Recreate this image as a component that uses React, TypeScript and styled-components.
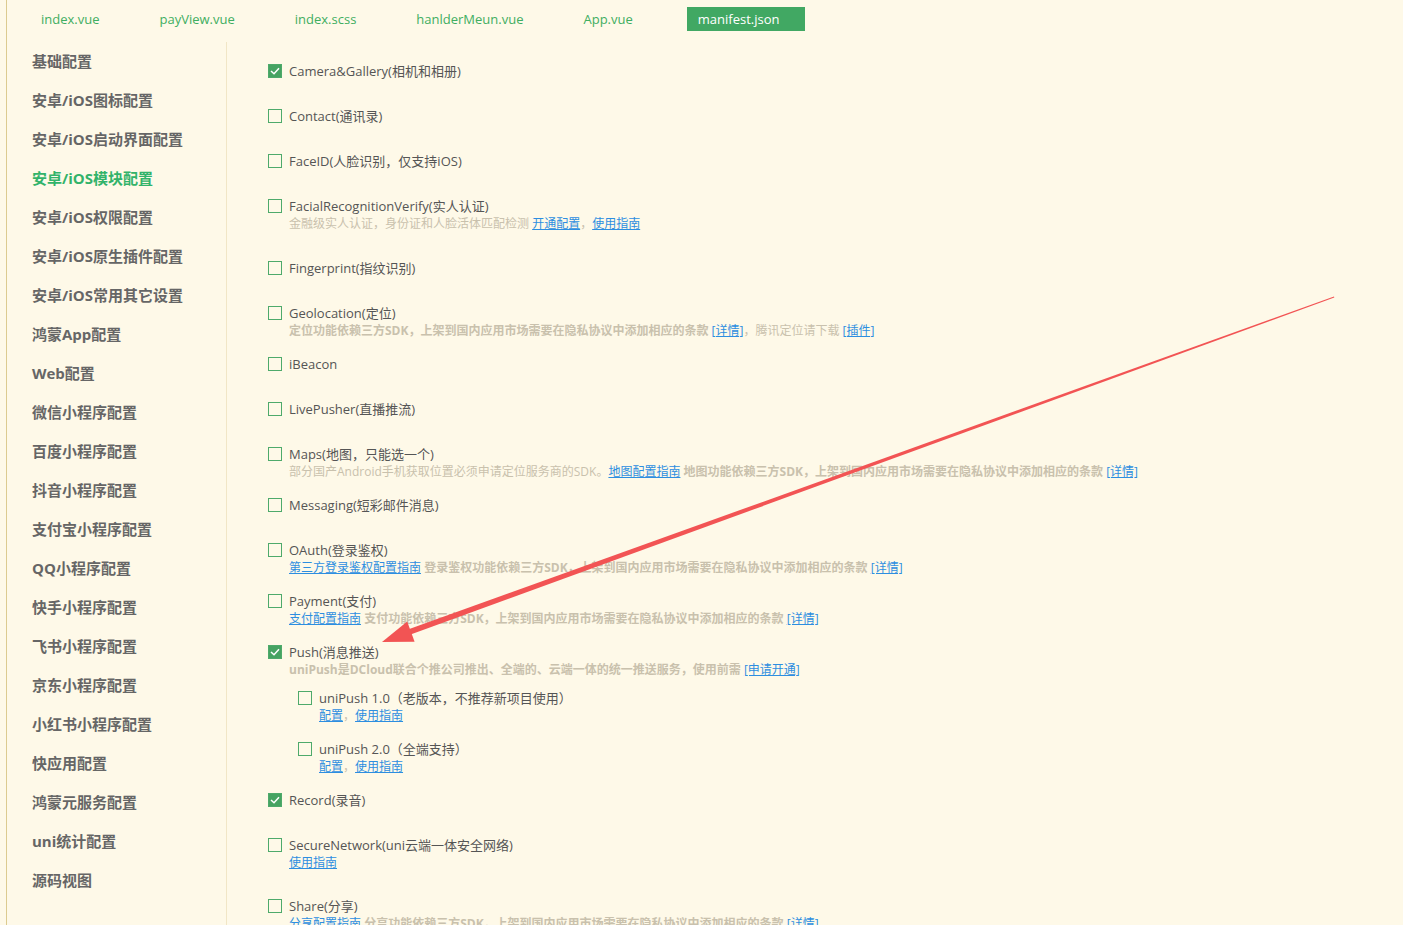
import React from 'react';
import styled, { createGlobalStyle } from 'styled-components';

const GlobalStyle = createGlobalStyle`
  html, body {
    margin: 0;
    padding: 0;
    background: #fef9e8;
    overflow: hidden;
  }
  body {
    font-family: "Open Sans", "Noto Sans CJK SC", sans-serif;
  }
`;

const Page = styled.div`
  position: relative;
  height: 925px;
  margin-left: 6px;
  border-left: 1px solid #dccb90;
  background: #fef9e8;
  overflow: hidden;
`;

const TabBar = styled.div`
  display: flex;
  align-items: flex-start;
  height: 42px;
  padding: 7px 0 0 4px;
  box-sizing: border-box;
`;

const Tab = styled.div<{ $active?: boolean }>`
  height: 24px;
  line-height: 24px;
  font-size: 13px;
  padding: ${(p) => (p.$active ? '0 26px 0 11px' : '0 30px')};
  margin-left: ${(p) => (p.$active ? '24px' : '0')};
  color: ${(p) => (p.$active ? '#ffffff' : '#3fae61')};
  background: ${(p) => (p.$active ? '#41a863' : 'transparent')};
  white-space: nowrap;
`;

const Body = styled.div`
  display: flex;
  height: 883px;
`;

const Sidebar = styled.div`
  width: 220px;
  flex-shrink: 0;
  box-sizing: border-box;
  padding-left: 25px;
  border-right: 1px solid #f1e6c6;
`;

const MenuItem = styled.div<{ $active?: boolean }>`
  height: 39px;
  line-height: 39px;
  font-size: 15px;
  font-weight: bold;
  color: ${(p) => (p.$active ? '#32b36a' : '#666666')};
  white-space: nowrap;
`;

const Content = styled.div`
  flex: 1;
  padding: 20px 0 0 41px;
`;

const Item = styled.div<{ $gap: number }>`
  margin-bottom: ${(p) => p.$gap}px;
`;

const TitleRow = styled.label`
  display: flex;
  align-items: center;
  height: 17px;
  font-size: 13px;
  color: #555555;
  white-space: nowrap;
`;

const Box = styled.span<{ $checked?: boolean }>`
  width: 14px;
  height: 14px;
  box-sizing: border-box;
  margin-right: 7px;
  border: 1px solid #4eaa6b;
  background: ${(p) => (p.$checked ? '#46a362' : 'transparent')};
  display: flex;
  align-items: center;
  justify-content: center;
  flex-shrink: 0;
`;

const Desc = styled.div<{ $bold?: boolean }>`
  height: 17px;
  line-height: 17px;
  margin-top: 1px;
  padding-left: 21px;
  font-size: 12px;
  color: #c9c1ad;
  font-weight: ${(p) => (p.$bold ? 'bold' : 'normal')};
  white-space: nowrap;
`;

const Strong = styled.span`
  font-weight: bold;
`;

const Link = styled.a`
  color: #2d8ee0;
  text-decoration: underline;
  font-weight: normal;
`;

const SubGroup = styled.div`
  margin: 11px 0 16px 30px;
`;

const Arrow = styled.svg`
  position: absolute;
  left: -7px;
  top: 0;
  pointer-events: none;
`;

const Check = () => (
  <svg width="10" height="8" viewBox="0 0 10 8">
    <path d="M1 4 L4 6.8 L9 1.2" fill="none" stroke="#ffffff" strokeWidth="1.5" />
  </svg>
);

const Option: React.FC<{ checked?: boolean; children: React.ReactNode }> = ({ checked, children }) => (
  <TitleRow>
    <Box $checked={checked}>{checked && <Check />}</Box>
    {children}
  </TitleRow>
);

const tabs = ['index.vue', 'payView.vue', 'index.scss', 'hanlderMeun.vue', 'App.vue', 'manifest.json'];

const menu = [
  '基础配置',
  '安卓/iOS图标配置',
  '安卓/iOS启动界面配置',
  '安卓/iOS模块配置',
  '安卓/iOS权限配置',
  '安卓/iOS原生插件配置',
  '安卓/iOS常用其它设置',
  '鸿蒙App配置',
  'Web配置',
  '微信小程序配置',
  '百度小程序配置',
  '抖音小程序配置',
  '支付宝小程序配置',
  'QQ小程序配置',
  '快手小程序配置',
  '飞书小程序配置',
  '京东小程序配置',
  '小红书小程序配置',
  '快应用配置',
  '鸿蒙元服务配置',
  'uni统计配置',
  '源码视图',
];

const privacy = '上架到国内应用市场需要在隐私协议中添加相应的条款';

export default function App() {
  return (
    <>
      <GlobalStyle />
      <Page>
        <TabBar>
          {tabs.map((t) => (
            <Tab key={t} $active={t === 'manifest.json'}>
              {t}
            </Tab>
          ))}
        </TabBar>
        <Body>
          <Sidebar>
            {menu.map((m) => (
              <MenuItem key={m} $active={m === '安卓/iOS模块配置'}>
                {m}
              </MenuItem>
            ))}
          </Sidebar>
          <Content>
            <Item $gap={28}>
              <Option checked>Camera&amp;Gallery(相机和相册)</Option>
            </Item>
            <Item $gap={28}>
              <Option>Contact(通讯录)</Option>
            </Item>
            <Item $gap={28}>
              <Option>FaceID(人脸识别，仅支持iOS)</Option>
            </Item>
            <Item $gap={27}>
              <Option>FacialRecognitionVerify(实人认证)</Option>
              <Desc>
                金融级实人认证，身份证和人脸活体匹配检测 <Link>开通配置</Link>，<Link>使用指南</Link>
              </Desc>
            </Item>
            <Item $gap={28}>
              <Option>Fingerprint(指纹识别)</Option>
            </Item>
            <Item $gap={16}>
              <Option>Geolocation(定位)</Option>
              <Desc>
                <Strong>定位功能依赖三方SDK，{privacy}</Strong> <Link>[详情]</Link>，腾讯定位请下载 <Link>[插件]</Link>
              </Desc>
            </Item>
            <Item $gap={28}>
              <Option>iBeacon</Option>
            </Item>
            <Item $gap={28}>
              <Option>LivePusher(直播推流)</Option>
            </Item>
            <Item $gap={16}>
              <Option>Maps(地图，只能选一个)</Option>
              <Desc>
                部分国产Android手机获取位置必须申请定位服务商的SDK。<Link>地图配置指南</Link>{' '}
                <Strong>地图功能依赖三方SDK，{privacy}</Strong> <Link>[详情]</Link>
              </Desc>
            </Item>
            <Item $gap={28}>
              <Option>Messaging(短彩邮件消息)</Option>
            </Item>
            <Item $gap={16}>
              <Option>OAuth(登录鉴权)</Option>
              <Desc>
                <Link>第三方登录鉴权配置指南</Link> <Strong>登录鉴权功能依赖三方SDK，{privacy}</Strong>{' '}
                <Link>[详情]</Link>
              </Desc>
            </Item>
            <Item $gap={16}>
              <Option>Payment(支付)</Option>
              <Desc>
                <Link>支付配置指南</Link> <Strong>支付功能依赖三方SDK，{privacy}</Strong> <Link>[详情]</Link>
              </Desc>
            </Item>
            <Item $gap={0}>
              <Option checked>Push(消息推送)</Option>
              <Desc $bold>
                uniPush是DCloud联合个推公司推出、全端的、云端一体的统一推送服务，使用前需 <Link>[申请开通]</Link>
              </Desc>
              <SubGroup>
                <Item $gap={16}>
                  <Option>uniPush 1.0（老版本，不推荐新项目使用）</Option>
                  <Desc>
                    <Link>配置</Link>，<Link>使用指南</Link>
                  </Desc>
                </Item>
                <Item $gap={0}>
                  <Option>uniPush 2.0（全端支持）</Option>
                  <Desc>
                    <Link>配置</Link>，<Link>使用指南</Link>
                  </Desc>
                </Item>
              </SubGroup>
            </Item>
            <Item $gap={28}>
              <Option checked>Record(录音)</Option>
            </Item>
            <Item $gap={26}>
              <Option>SecureNetwork(uni云端一体安全网络)</Option>
              <Desc>
                <Link>使用指南</Link>
              </Desc>
            </Item>
            <Item $gap={17}>
              <Option>Share(分享)</Option>
              <Desc>
                <Link>分享配置指南</Link> <Strong>分享功能依赖三方SDK，{privacy}</Strong> <Link>[详情]</Link>
              </Desc>
            </Item>
          </Content>
        </Body>
        <Arrow width="1403" height="925" viewBox="0 0 1403 925">
          <polygon points="1334,296.5 1334.3,297.5 410.6,634.6 408.6,629.2" fill="#f25454" />
          <polygon points="382,642 407.2,621.6 414.6,641.8" fill="#f25454" />
        </Arrow>
      </Page>
    </>
  );
}
